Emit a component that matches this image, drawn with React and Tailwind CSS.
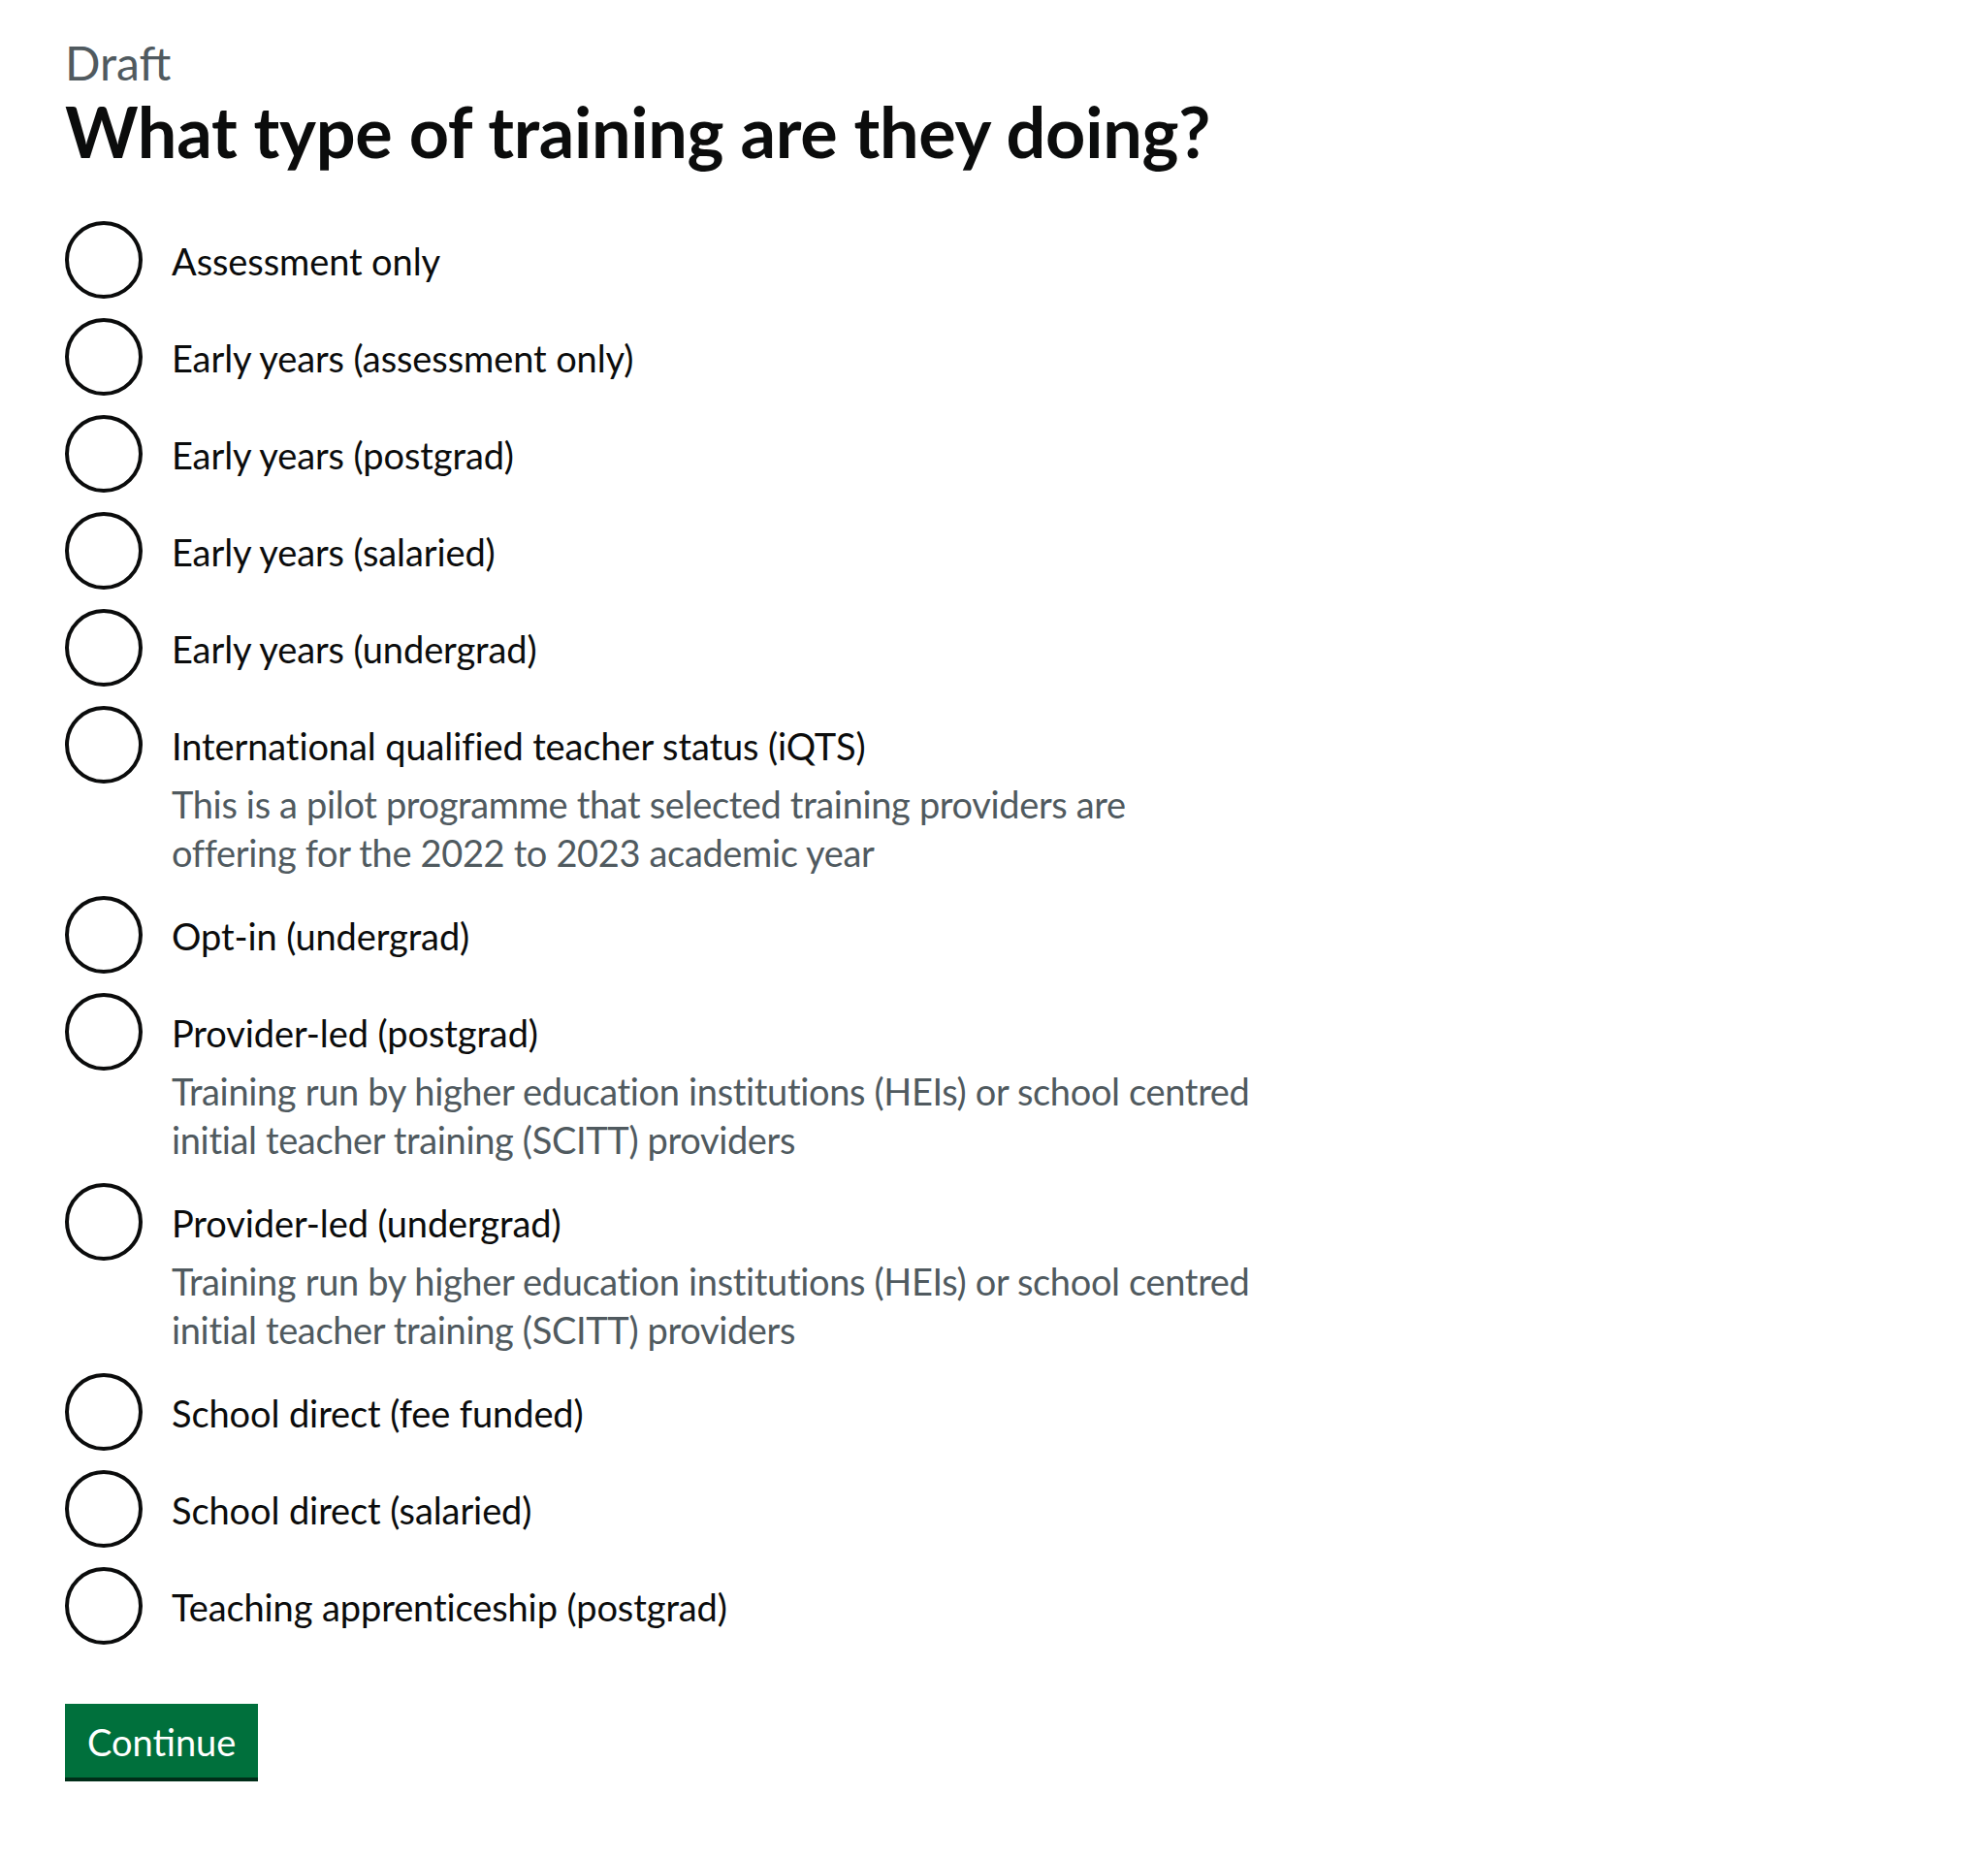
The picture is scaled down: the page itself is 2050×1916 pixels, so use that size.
import React, { useState } from 'react';

const options = [
    { id: 'assessment-only', label: 'Assessment only' },
    { id: 'early-years-assessment-only', label: 'Early years (assessment only)' },
    { id: 'early-years-postgrad', label: 'Early years (postgrad)' },
    { id: 'early-years-salaried', label: 'Early years (salaried)' },
    { id: 'early-years-undergrad', label: 'Early years (undergrad)' },
    {
        id: 'iqts',
        label: 'International qualified teacher status (iQTS)',
        hint: ['This is a pilot programme that selected training providers are', 'offering for the 2022 to 2023 academic year'],
    },
    { id: 'opt-in-undergrad', label: 'Opt-in (undergrad)' },
    {
        id: 'provider-led-postgrad',
        label: 'Provider-led (postgrad)',
        hint: ['Training run by higher education institutions (HEIs) or school centred', 'initial teacher training (SCITT) providers'],
    },
    {
        id: 'provider-led-undergrad',
        label: 'Provider-led (undergrad)',
        hint: ['Training run by higher education institutions (HEIs) or school centred', 'initial teacher training (SCITT) providers'],
    },
    { id: 'school-direct-tuition-fee', label: 'School direct (fee funded)' },
    { id: 'school-direct-salaried', label: 'School direct (salaried)' },
    { id: 'pg-teaching-apprenticeship', label: 'Teaching apprenticeship (postgrad)' },
];

const RadioItem = ({ option, checked, onChange }) => (
    <label className="flex cursor-pointer">
        <input
            type="radio"
            name="training-route"
            value={option.id}
            checked={checked}
            onChange={() => onChange(option.id)}
            className="sr-only"
        />
        {/* Radio circle */}
        <span className="w-[80px] h-[80px] shrink-0 rounded-full border-4 border-[#0b0c0c] flex items-center justify-center">
            {checked && <span className="w-[40px] h-[40px] rounded-full bg-[#0b0c0c]" />}
        </span>
        <span className="pl-[30px] pt-[16px]">
            <span className="block text-[38px] leading-[50px] tracking-[-0.1px]">{option.label}</span>
            {option.hint && (
                <span className="block pt-[10px] text-[38px] leading-[50px] tracking-[-0.35px] text-[#505a5f]">
                    {option.hint[0]}
                    <br />
                    {option.hint[1]}
                </span>
            )}
        </span>
    </label>
);

export default function App() {
    const [route, setRoute] = useState('');

    return (
        <div className="min-h-screen bg-white text-[#0b0c0c] font-['Lato','Liberation_Sans',sans-serif] px-[67px] pt-[35px] pb-[60px]">
            <form onSubmit={(e) => e.preventDefault()}>
                <fieldset>
                    <legend>
                        <span className="block text-[48px] leading-[60px] text-[#505a5f]">Draft</span>
                        <h1 className="text-[72px] leading-[80px] font-bold tracking-[-0.3px]">What type of training are they doing?</h1>
                    </legend>

                    <div className="flex flex-col gap-[20px] mt-[53px]">
                        {options.map((o) => (
                            <RadioItem key={o.id} option={o} checked={route === o.id} onChange={setRoute} />
                        ))}
                    </div>
                </fieldset>

                <button
                    type="submit"
                    className="mt-[61px] px-[19px] pt-[16px] pb-[14px] border-4 border-transparent bg-[#00703c] text-white text-[38px] leading-[38px] shadow-[0_4px_0_#002d18]"
                >
                    Continue
                </button>
            </form>
        </div>
    );
}
